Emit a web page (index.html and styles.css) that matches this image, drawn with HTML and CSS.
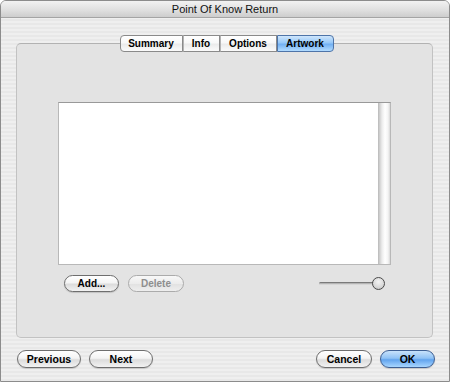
FILE: index.html
```html
<!DOCTYPE html>
<html lang="en">
<head>
<meta charset="UTF-8" />
<title>Point Of Know Return</title>
<link rel="stylesheet" href="styles.css">
</head>
<body>

<div class="window">
  <div class="titlebar">Point Of Know Return</div>

  <div class="content">
    <div class="groupbox">
      <div class="tabs">
        <span class="tab tab-summary">Summary</span>
        <span class="tab tab-info">Info</span>
        <span class="tab tab-options">Options</span>
        <span class="tab tab-artwork active">Artwork</span>
      </div>

      <div class="well">
        <div class="well-area"></div>
        <div class="well-scroll"></div>
      </div>

      <div class="well-controls">
        <button class="btn btn-add">Add...</button>
        <button class="btn btn-delete" disabled>Delete</button>
        <div class="slider">
          <div class="slider-track"></div>
          <div class="slider-knob"></div>
        </div>
      </div>
    </div>

    <div class="footer">
      <div class="footer-group">
        <button class="btn btn-wide">Previous</button>
        <button class="btn btn-wide">Next</button>
      </div>
      <div class="footer-group">
        <button class="btn btn-cancel">Cancel</button>
        <button class="btn btn-ok default">OK</button>
      </div>
    </div>
  </div>
</div>

</body>
</html>
```

FILE: styles.css
```css
body {
  margin: 0;
  padding: 0;
  background: #fff;
  font-family: 'Liberation Sans', Arial, sans-serif;
  color: #000;
}
.window {
  width: 450px;
  height: 382px;
  box-sizing: border-box;
  border: 1px solid #8c8c8c;
  border-radius: 6px 6px 0 0;
  overflow: hidden;
  background: repeating-linear-gradient(to bottom, #efefef 0, #efefef 2px, #e8e8e8 2px, #e8e8e8 4px);
}
.titlebar {
  height: 17px;
  box-sizing: border-box;
  border-bottom: 1px solid #a4a4a4;
  background: linear-gradient(#f2f2f2, #dedede 60%, #cdcdcd);
  text-align: center;
  font-size: 11px;
  line-height: 17px;
  color: #111;
}
.content {
  padding: 0 16px 0 15px;
}
.groupbox {
  margin-top: 25px;
  height: 295px;
  box-sizing: border-box;
  border: 1px solid #c2c2c2;
  border-top-color: #b2b2b2;
  border-radius: 5px;
  background: #e3e3e3;
}
.tabs {
  display: flex;
  justify-content: center;
  margin: -9px 0 0 4px;
  height: 17px;
}
.tab {
  box-sizing: border-box;
  height: 17px;
  border: 1px solid #8a8a8a;
  border-left: 1px solid #b4b4b4;
  background: linear-gradient(#ffffff 0%, #f8f8f8 45%, #ebebeb 55%, #fbfbfb 100%);
  font-size: 10px;
  font-weight: bold;
  line-height: 15px;
  text-align: center;
}
.tab-summary {
  width: 63px;
  border-left-color: #8a8a8a;
  border-radius: 4px 0 0 4px;
}
.tab-info { width: 37px; }
.tab-options { width: 57px; }
.tab-artwork {
  width: 57px;
  border-radius: 0 4px 4px 0;
}
.tab.active {
  border-color: #4e74a8;
  background: linear-gradient(#cfe6fc 0%, #96c8f8 45%, #72b0f2 55%, #b2dcff 100%);
}
.well {
  display: flex;
  width: 333px;
  height: 163px;
  box-sizing: border-box;
  margin: 50px 0 0 41px;
  border: 1px solid #b8b8b8;
  border-top-color: #999;
  background: #fff;
}
.well-area {
  flex: 1;
}
.well-scroll {
  width: 12px;
  background: linear-gradient(to right, #b8b8b8 0, #d4d4d4 2px, #ececec 4px, #fff 7px, #f4f4f4 10px, #d8d8d8 12px);
}
.well-controls {
  display: flex;
  align-items: center;
  gap: 9px;
  width: 333px;
  box-sizing: border-box;
  margin: 10px 0 0 41px;
  padding: 0 6px;
}
.btn {
  box-sizing: border-box;
  height: 17px;
  padding: 0;
  border: 1px solid #6e6e6e;
  border-radius: 9px;
  background: linear-gradient(#ffffff 0%, #f4f4f4 45%, #dcdcdc 55%, #f2f2f2 100%);
  box-shadow: 0 1px 1px rgba(0, 0, 0, 0.15);
  font-family: 'Liberation Sans', Arial, sans-serif;
  font-size: 10px;
  font-weight: bold;
  line-height: 15px;
  color: #000;
  text-align: center;
}
.btn-add { width: 55px; }
.btn-delete { width: 56px; }
.btn:disabled {
  border-color: #ababab;
  color: #8e8e8e;
  background: linear-gradient(#f8f8f8, #ececec 50%, #e2e2e2 55%, #eeeeee);
  box-shadow: none;
}
.slider {
  position: relative;
  width: 66px;
  height: 14px;
  margin-left: auto;
}
.slider-track {
  margin-top: 5px;
  width: 58px;
  height: 3px;
  box-sizing: border-box;
  border-radius: 2px;
  border-top: 1px solid #7a7a7a;
  background: #b4b4b4;
  border-bottom: 1px solid #d6d6d6;
}
.slider-knob {
  position: absolute;
  top: 0;
  right: 0;
  width: 13px;
  height: 13px;
  box-sizing: border-box;
  border: 1px solid #4a4a4a;
  border-radius: 50%;
  background: radial-gradient(circle at 50% 35%, #f4f4f4, #d8d8d8 60%, #b8b8b8);
}
.footer {
  display: flex;
  justify-content: space-between;
  margin: 12px -2px 0 1px;
}
.footer-group {
  display: flex;
  gap: 8px;
}
.footer .btn {
  height: 18px;
  line-height: 16px;
  font-size: 10.5px;
}
.btn-wide { width: 64px; }
.btn-cancel { width: 56px; }
.btn-ok { width: 55px; }
.btn.default {
  border-color: #3d5f93;
  background: linear-gradient(#c8e2fb 0%, #8fc2f5 45%, #62a4ee 55%, #a8d6ff 100%);
}
```
